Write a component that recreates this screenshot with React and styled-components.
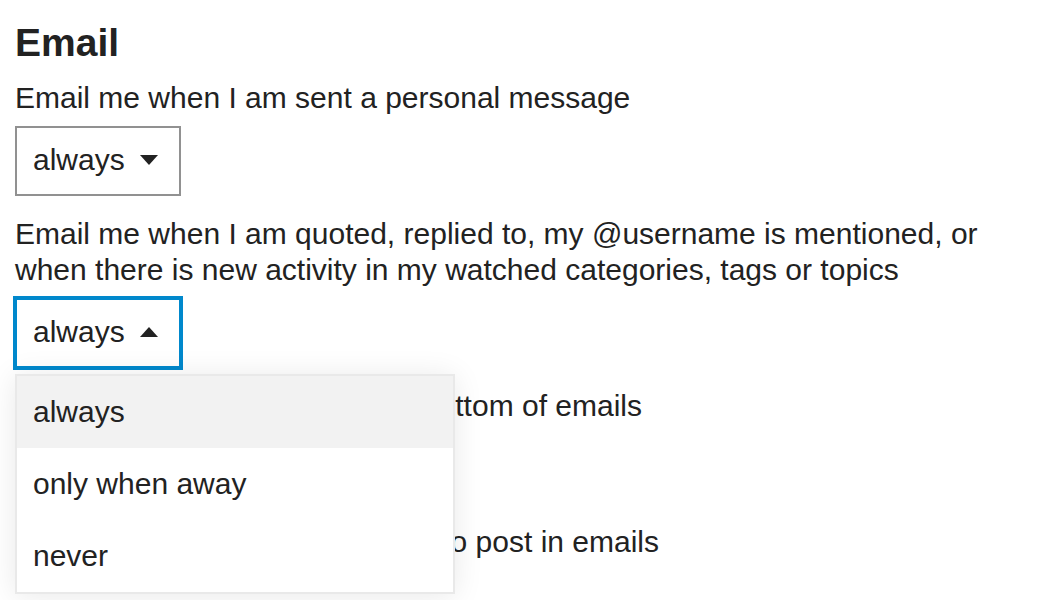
import React from "react";
import styled, { createGlobalStyle, css } from "styled-components";

const GlobalStyle = createGlobalStyle`
  html, body {
    margin: 0;
    padding: 0;
    background: #ffffff;
  }
  body {
    font-family: "Liberation Sans", Arial, Helvetica, sans-serif;
    color: #222222;
    -webkit-font-smoothing: antialiased;
  }
  * { box-sizing: border-box; }
`;

const Page = styled.div`
  padding: 20px 15px;
  max-width: 1046px;
`;

const Title = styled.h3`
  margin: 0 0 14px;
  font-size: 39px;
  line-height: 46px;
  font-weight: 700;
  color: #222222;
`;

const Field = styled.div`
  margin-bottom: 20px;
`;

const Label = styled.div`
  font-size: 30px;
  line-height: 36px;
  color: #222222;
  margin-bottom: 10px;
`;

const CheckLabel = styled.label`
  display: flex;
  align-items: flex-start;
  font-size: 30px;
  line-height: 36px;
  color: #222222;
`;

const Check = styled.span`
  flex: none;
  width: 26px;
  height: 26px;
  margin: 5px 16px 0 0;
  border: 2px solid #919191;
  border-radius: 4px;
  background: #fff;
`;

const SelectWrap = styled.div`
  position: relative;
  display: inline-block;
`;

const SelectButton = styled.div`
  display: flex;
  align-items: center;
  height: 70px;
  padding: 14px 21px 16px 16px;
  border: 2px solid #919191;
  background: #ffffff;
  font-size: 30px;
  line-height: 36px;
  color: #222222;
  ${(p) =>
    p.$open &&
    css`
      border-color: #0088cc;
      box-shadow: 0 0 0 2px #0088cc;
    `}
`;

const Caret = styled.svg`
  margin-left: 15px;
  width: 18px;
  height: 10px;
  fill: #222222;
`;

const Menu = styled.ul`
  position: absolute;
  top: calc(100% + 6px);
  left: 0;
  width: 440px;
  margin: 0;
  padding: 0;
  list-style: none;
  background: #ffffff;
  border: 2px solid #e9e9e9;
  box-shadow: 0 2px 28px rgba(0, 0, 0, 0.09);
  z-index: 10;
`;

const Option = styled.li`
  height: 72px;
  padding: 18px 16px;
  font-size: 30px;
  line-height: 36px;
  color: #222222;
  background: ${(p) => (p.$active ? "#f2f2f2" : "#ffffff")};
`;

function Select({ value, open, options = [] }) {
  return (
    <SelectWrap>
      <SelectButton $open={open}>
        <span>{value}</span>
        <Caret viewBox="0 0 18 10">
          {open ? <path d="M0 10 L9 0 L18 10 Z" /> : <path d="M0 0 L18 0 L9 10 Z" />}
        </Caret>
      </SelectButton>
      {open && (
        <Menu>
          {options.map((o, i) => (
            <Option key={o} $active={i === 0}>
              {o}
            </Option>
          ))}
        </Menu>
      )}
    </SelectWrap>
  );
}

export default function App() {
  return (
    <>
      <GlobalStyle />
      <Page>
        <Title>Email</Title>
        <Field>
          <Label>Email me when I am sent a personal message</Label>
          <Select value="always" />
        </Field>
        <Field>
          <Label>
            Email me when I am quoted, replied to, my @username is mentioned, or when there is new
            activity in my watched categories, tags or topics
          </Label>
          <Select value="always" open options={["always", "only when away", "never"]} />
        </Field>
        <Field>
          <Label>Include previous replies at the bottom of emails</Label>
          <Select value="unless previously sent" />
        </Field>
        <Field>
          <CheckLabel>
            <Check />
            Include an excerpt of replied to post in emails
          </CheckLabel>
        </Field>
      </Page>
    </>
  );
}
